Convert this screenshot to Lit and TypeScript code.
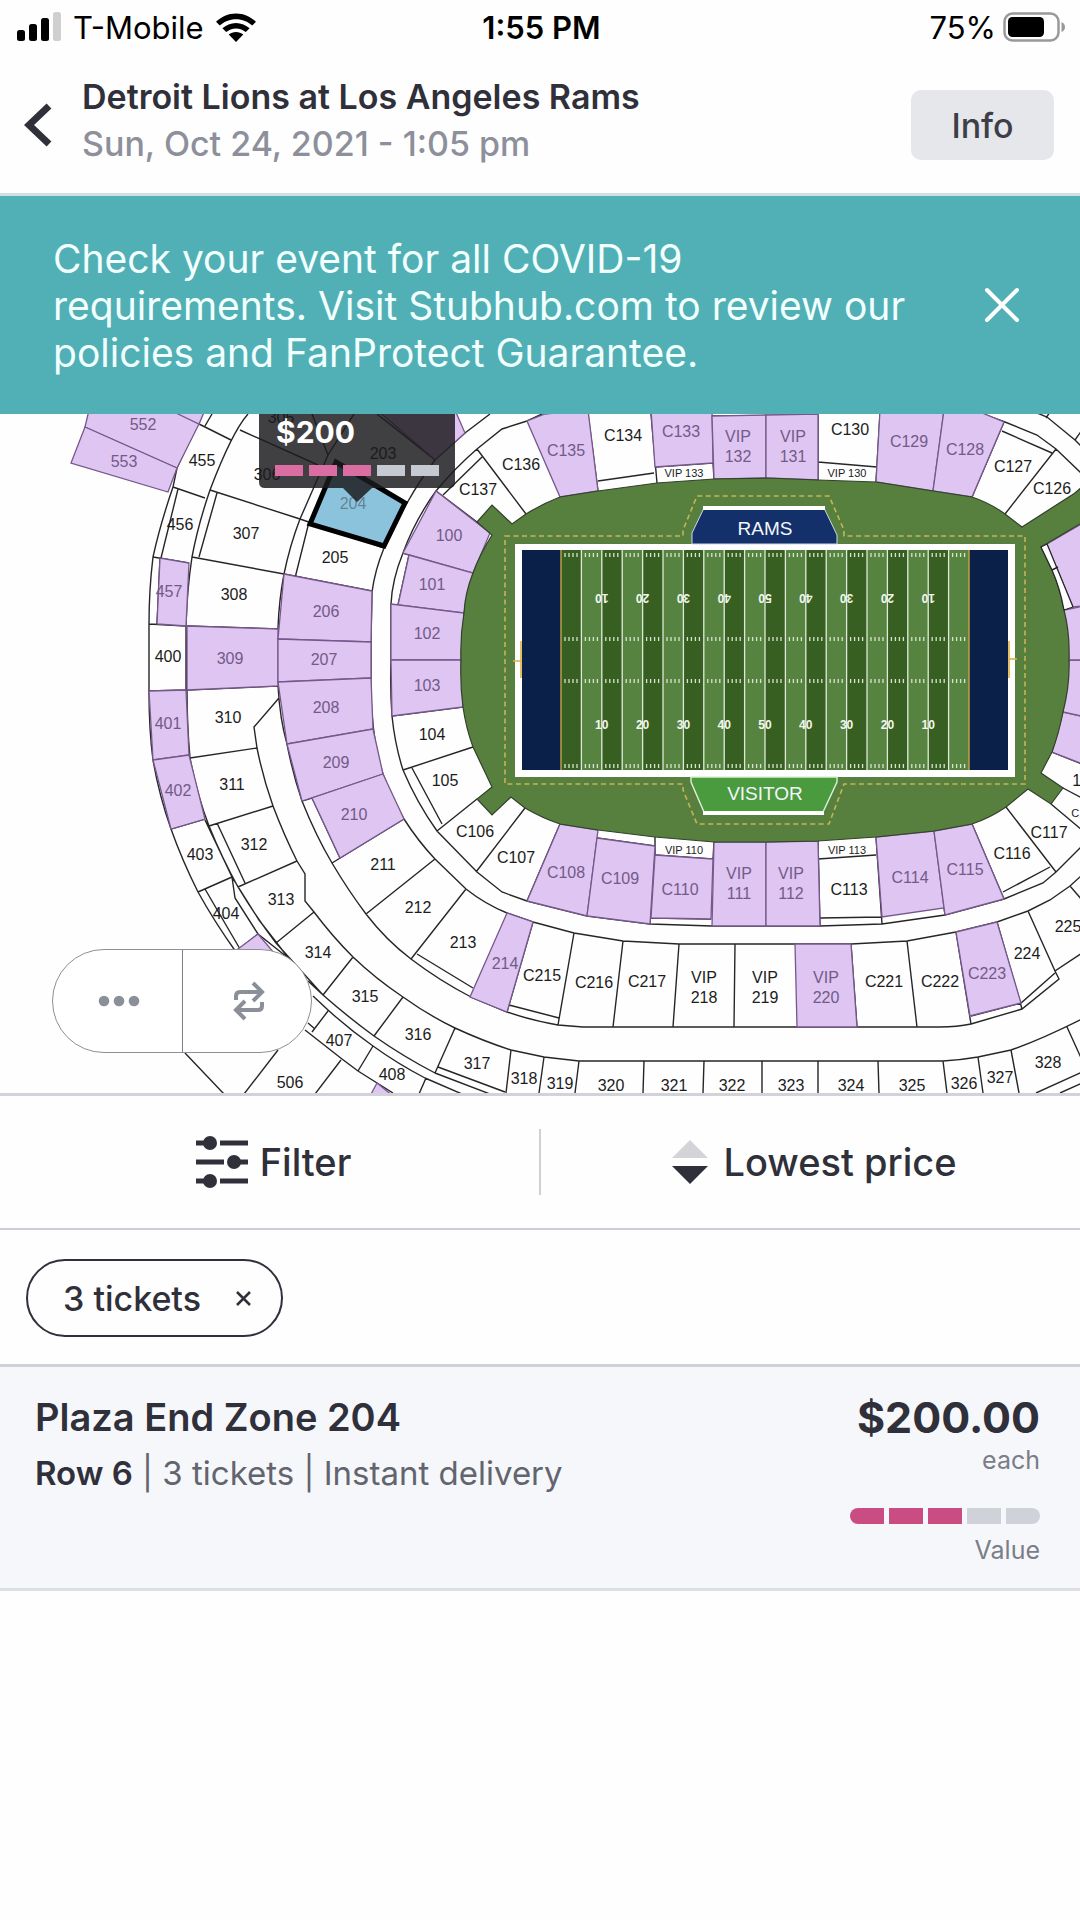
import { LitElement, html, css, svg } from "lit";
import { customElement, property } from "lit/decorators.js";

type Label = [text: string, x: number, y: number, listed?: boolean];

/* Sections with listings, tinted lilac. */
const LISTED: string[] = [
  "89,410 85,427 177,468 199,424 178,410",
  "85,427 71,463 168,492 177,468",
  "170,410 178,414 199,424 205,410",
  "160,558 189,563 186,626 157,624",
  "149,691 186,690 189,755 153,760",
  "153,760 189,755 205,819 171,829",
  "238,949 258,934 280,960 246,960",
  "187,626 278,629 278,686 187,690",
  "377,410 435,460 465,433 455,410",
  "284,574 372,591 371,642 278,639",
  "278,639 371,642 371,678 278,682",
  "278,682 371,678 373,729 287,744",
  "287,744 373,729 383,774 302,801",
  "312,798 383,774 404,819 340,858",
  "507,913 533,922 507,1012 470,997",
  "795,944 851,944 857,1027 797,1027",
  "956,932 997,922 1021,1003 970,1016",
  "436,491 490,533 473,573 403,553",
  "409,555 473,573 464,613 398,605",
  "391,604 464,613 461,660 391,660",
  "391,660 461,660 463,707 392,716",
  "560,824 598,830 587,916 527,901",
  "597,838 655,846 650,924 587,916",
  "655,855 713,859 711,919 651,918",
  "714,842 766,842 766,926 712,926",
  "766,842 818,841 820,926 766,926",
  "876,837 934,831 944,908 882,917",
  "934,831 972,824 1004,899 945,915",
  "1063,712 1090,718 1090,767 1052,752",
  "1069,660 1090,660 1090,718 1063,712",
  "1064,610 1090,605 1090,660 1069,660",
  "1047,544 1090,519 1090,605 1073,607",
  "527,421 545,414 588,410 598,491 560,497",
  "651,410 712,410 713,463 655,467",
  "712,416 766,415 766,478 714,479",
  "766,415 818,414 818,480 766,478",
  "880,410 944,410 933,491 876,482",
  "944,410 975,410 1004,422 972,497 933,491",
  "377,1083 393,1096 370,1096",
];

/* Outlines and dividers of the remaining sections. */
const LINES: string[] = [
  /* outer edge of the 400 level */
  "M202,414L198,423 177,468 173,487Q160,525 153,557Q149,590 149,624L149,691Q149,730 153,760Q159,795 171,829Q182,860 198,892Q214,921 236,952",
  "M305,1030L342,1059 358,1071 393,1093",
  /* edge between the 300 and 400 levels */
  "M248,414Q232,432 210,490Q198,525 192,557Q187,590 186,626L187,690Q187,725 190,758Q197,795 209,826Q222,858 238,887Q256,917 276,943L323,995Q348,1017 374,1036Q404,1057 435,1073L490,1094",
  "M232,877L235,898 258,934 287,957",
  "M205,820L232,877 259,920 290,960",
  "M308,981L323,995M313,996L328,1010Q350,1030 373,1046Q398,1064 425,1078L462,1094",
  /* inner edge of the 300 level */
  "M279,698L254,727 257,748Q263,778 273,806Q284,835 297,861L305,874 305,901 314,912Q332,936 353,957Q376,979 403,997Q428,1015 455,1028Q483,1041 511,1050L544,1057 579,1061H943Q961,1060 978,1057L1011,1050Q1040,1040 1082,1019",
  /* outer edge of the 200 level */
  "M328,455L300,519Q290,545 284,574Q279,600 278,628V686Q280,720 287,744Q293,775 302,801Q316,836 332,863Q348,890 366,914Q386,940 411,959Q440,981 471,997L507,1012Q530,1020 558,1025L583,1027H940Q957,1027 971,1024L1022,1009 1059,979 1055,971 1082,953",
  /* walkway edge of the 200 level */
  "M490,414L465,433 435,460Q420,480 407,503Q394,524 384,548Q375,570 372,592L371,643V678Q370,705 375,740Q378,758 383,774Q392,798 404,819Q418,841 435,859L466,889Q485,904 507,913L533,922 574,933 623,941 679,944H851L907,941 956,932 997,922 1028,911 1050,900 1070,886 1082,875",
  /* walkway edge of the 100 level */
  "M542,414L527,421 502,429 477,449Q455,468 436,491Q415,520 403,553Q392,580 391,604V660Q390,690 392,716Q395,745 403,770Q417,803 437,831L477,872 502,892 527,901 587,916 650,924 712,926H820L882,924 945,915 1004,899 1043,883 1056,872 1082,846",
  "M983,414L1005,422 1037,435 1056,449 1082,474M1027,409L1047,417 1075,440 1082,447M1046,418L1050,412M1075,440L1082,430",
  /* 400 level */
  "M199,424L231,440M205,426L212,414M173,487L205,498M178,489L161,558M153,557L189,563M160,558L157,624M149,624L186,626V690L149,691M171,829L205,819M198,892L232,877M205,889L240,949M239,949L258,934M328,1011L312,1032M308,1023L315,1029M373,1046L358,1071M426,1078L419,1094M278,1050L244,1094M341,1060L315,1094M185,1053L224,1094",
  /* 300 level */
  "M240,430L318,465M210,490L300,519M217,493L199,557M192,557L284,574M187,626L278,629M187,690L278,686M190,758L257,748M209,826L273,806M217,823L245,883M238,887L297,861M276,943L314,912M323,995L353,957M374,1036L403,997M435,1073L455,1028M438,1067L505,1092M511,1050L506,1093M544,1057L539,1093M579,1061L575,1093M644,1061L643,1093M704,1061L703,1093M762,1061V1093M818,1061V1093M878,1061L879,1093M943,1061L947,1093M978,1057L983,1093M1011,1050L1019,1093M1067,1027L1082,1060M1036,1093L1082,1072M1060,1093L1082,1083",
  /* 200 level */
  "M312,414L328,455L354,414M377,414L435,460M309,522L295,578M300,519L384,548M284,574L372,591M302,801L312,798 340,858M332,863L404,819M366,914L435,859M411,959L466,889M417,954L473,988M533,922L507,1012M509,1005L559,1018M574,933L558,1025M623,941L613,1027M679,944L673,1027M735,944L734,1027M907,941L917,1027M851,944L857,1027M956,932L971,1024M997,922L1022,1009M971,1016L1021,1003 1055,973M1028,911L1055,971M1070,886L1082,900",
  /* 100 level */
  "M436,491L477,522M443,495L482,457M403,553L409,555 398,605M392,716L463,707M403,770L473,747M412,768L442,824M437,831L477,799M525,808L476,872M560,824L527,901M597,838L655,846M655,837V855L713,859 714,842M655,855L650,924M651,918L711,919M818,841L820,926M818,859L876,855M820,918L882,917M876,837L882,924M944,908L945,915M972,824L1004,899M1003,892L1050,867M1006,807L1056,872M1051,804L1082,830M1063,788L1082,798M1052,752L1082,764M1052,569L1082,556M477,449L526,514M598,481L654,473M588,414L598,491M651,414L657,483M655,467L713,463 714,479M712,416L818,415V480M818,462L877,467M880,414L876,482M1004,422L972,497M1056,449L1005,514M1002,431L1052,453M1075,493L1082,489",
];

const TURF =
  "M492,535Q479,556 473,573Q465,593 464,613Q460,637 461,660Q460,685 463,707Q466,728 473,747L492,787 477,799 492,815 511,797 525,808Q542,818 560,824L598,830 655,837 714,842H766L818,841 876,837 934,831 972,824Q990,818 1006,807L1028,789 1051,804 1063,788 1041,773 1052,752Q1059,733 1063,712Q1070,685 1069,660Q1070,633 1064,610Q1060,588 1052,570L1041,547 1090,518V480L1075,493 1022,527 1005,514Q990,503 972,497L933,491 876,482 818,480 766,478 714,479 657,483 598,491 560,497Q542,504 526,514L512,524 492,505 477,522Z";

const LABELS: Label[] = [
  ["552", 143, 424, true], ["553", 124, 461, true], ["455", 202, 460], ["456", 180, 524],
  ["457", 169, 591, true], ["400", 168, 656], ["401", 168, 723, true], ["402", 178, 790, true],
  ["403", 200, 854], ["404", 226, 913], ["305", 281, 417], ["306", 267, 474], ["307", 246, 533],
  ["308", 234, 594], ["309", 230, 658, true], ["310", 228, 717], ["311", 232, 784],
  ["312", 254, 844], ["313", 281, 899], ["314", 318, 952], ["315", 365, 996], ["316", 418, 1034],
  ["317", 477, 1063], ["318", 524, 1078], ["319", 560, 1083], ["320", 611, 1085],
  ["321", 674, 1085], ["322", 732, 1085], ["323", 791, 1085], ["324", 851, 1085],
  ["325", 912, 1085], ["326", 964, 1083], ["327", 1000, 1077], ["328", 1048, 1062],
  ["407", 339, 1040], ["408", 392, 1074], ["506", 290, 1082], ["203", 383, 453],
  ["205", 335, 557], ["206", 326, 611, true], ["207", 324, 659, true], ["208", 326, 707, true],
  ["209", 336, 762, true], ["210", 354, 814, true], ["211", 383, 864], ["212", 418, 907],
  ["213", 463, 942], ["214", 505, 963, true], ["C215", 542, 975], ["C216", 594, 982],
  ["C217", 647, 981], ["VIP", 704, 977], ["218", 704, 997], ["VIP", 765, 977], ["219", 765, 997],
  ["VIP", 826, 977, true], ["220", 826, 997, true], ["C221", 884, 981], ["C222", 940, 981],
  ["C223", 987, 973, true], ["224", 1027, 953], ["225", 1068, 926], ["100", 449, 535, true],
  ["101", 432, 584, true], ["102", 427, 633, true], ["103", 427, 685, true], ["104", 432, 734],
  ["105", 445, 780], ["C106", 475, 831], ["C107", 516, 857], ["C108", 566, 872, true],
  ["C109", 620, 878, true], ["C110", 680, 889, true], ["VIP", 739, 873, true],
  ["111", 739, 893, true], ["VIP", 791, 873, true], ["112", 791, 893, true], ["C113", 849, 889],
  ["C114", 910, 877, true], ["C115", 965, 869, true], ["C116", 1012, 853], ["C117", 1049, 832],
  ["118", 1085, 780], ["C137", 478, 489], ["C136", 521, 464], ["C135", 566, 450, true],
  ["C134", 623, 435], ["C133", 681, 431, true], ["VIP", 738, 436, true], ["132", 738, 456, true],
  ["VIP", 793, 436, true], ["131", 793, 456, true], ["C130", 850, 429], ["C129", 909, 441, true],
  ["C128", 965, 449, true], ["C127", 1013, 466], ["C126", 1052, 488],
];

const SMALL_LABELS: Label[] = [
  ["VIP 133", 684, 473], ["VIP 130", 847, 473], ["VIP 110", 684, 850], ["VIP 113", 847, 850],
  ["C118", 1084, 813],
];

const YARDS = [10, 20, 30, 40, 50, 40, 30, 20, 10];
const STRIPE = 20.4;
const FIELD_X = 561;

@customElement("value-meter")
class ValueMeter extends LitElement {
  @property({ type: Number }) score = 0;

  static styles = css`
    :host { display: flex; gap: 5px; }
    .seg { width: 34px; height: 16px; background: #d0d2da; }
    .seg.on { background: #c94d82; }
    .seg:first-child { border-radius: 8px 0 0 8px; }
    .seg:last-child { border-radius: 0 8px 8px 0; }
  `;

  render() {
    return [1, 2, 3, 4, 5].map(
      (n) => html`<span class="seg ${n <= this.score ? "on" : ""}"></span>`
    );
  }
}

@customElement("stadium-map")
class StadiumMap extends LitElement {
  static styles = css`
    :host { display: block; position: relative; font-family: "Liberation Sans", Arial, sans-serif; }
    .map { display: block; width: 100%; height: auto; background: #fefefe; }
    .listed { fill: #dec5f2; stroke: #76588c; stroke-width: 1.3; }
    .lines { fill: none; stroke: #262626; stroke-width: 1.4; }
    .turf { fill: #57803f; stroke: #33402c; stroke-width: 1.2; }
    .strip { fill: #fff; stroke: #262626; stroke-width: 1.2; }
    .label { font-size: 16px; text-anchor: middle; fill: #1c1c1c; }
    .label.dim { fill: #735a88; }
    .label.small { font-size: 11px; }
    .yard { font-size: 12px; font-weight: 700; text-anchor: middle; fill: #f2f7ee; }
    .bench { font-size: 19px; text-anchor: middle; fill: #f3f6fa; }
    .price { font-family: Inter, sans-serif; font-size: 30px; font-weight: 700; fill: #fff; }
    .tools {
      position: absolute; left: 52px; bottom: 40px; display: flex; width: 260px; height: 104px;
      box-sizing: border-box; border: 1px solid #8b8f98; border-radius: 52px; background: #fff;
      overflow: hidden;
    }
    .tool {
      flex: 1; display: flex; align-items: center; justify-content: center; padding: 0 0 0 4px;
      border: 0; background: none; color: #8b8f9a;
    }
    .tool + .tool { border-left: 1px solid #7b7f88; }
  `;

  private field() {
    const stripes = Array.from({ length: 20 }, (_, i) => i);
    const hashes = stripes.flatMap((i) =>
      [4, 8, 12, 16].map((d) => FIELD_X + i * STRIPE + d)
    );
    return svg`
      <path class="turf" d=${TURF}></path>
      <path d="M505,536H683V530L697,496H829L844,530V536H1025V784H844L829,824H697L683,790V784H505Z"
        fill="none" stroke="#c8b355" stroke-width="1.6" stroke-dasharray="5 3.5"></path>
      <rect x="515" y="544" width="500" height="233" fill="#fff"></rect>
      <rect x="522" y="550" width="39" height="220" fill="#0a2049"></rect>
      <rect x="969" y="550" width="39" height="220" fill="#0a2049"></rect>
      ${stripes.map(
        (i) => svg`<rect x=${FIELD_X + i * STRIPE} y="550" width=${STRIPE} height="220"
          fill=${i % 2 ? "#578341" : "#385f22"}></rect>`
      )}
      ${stripes.slice(1).map(
        (i) => svg`<path d="M${FIELD_X + i * STRIPE},550V770" stroke="#dfe9d9" stroke-width="1.3"></path>`
      )}
      ${[555, 639, 681, 766].map(
        (y) => svg`<path d=${hashes.map((x) => `M${x},${y - 2}v4`).join("")}
          stroke="#d6e3cd" stroke-width="1.3"></path>`
      )}
      <path d="M561,550V770M969,550V770" stroke="#c9a545" stroke-width="1.4"></path>
      <path d="M521,641V678M513,661H521M1009,641V678M1009,659H1017" stroke="#e0b040" stroke-width="1.6"></path>
      ${YARDS.map((n, i) => {
        const x = FIELD_X + (i + 1) * STRIPE * 2;
        return svg`
          <text class="yard" x=${x} y="729">${n}</text>
          <text class="yard" x=${x} y="600" transform="rotate(180 ${x} 597)">${n}</text>`;
      })}
      <path d="M692,544V533L704,508H824L837,535V544Z" fill="#14306a" stroke="#cdd8e6" stroke-width="1"></path>
      <path d="M703,508H825" stroke="#fff" stroke-width="4"></path>
      <path d="M691,777V782L704,812H823L837,782V777Z" fill="#4a9a3e" stroke="#dcefd8" stroke-width="1.4"></path>
      <path d="M703,813H824" stroke="#fff" stroke-width="4"></path>
      <text class="bench" x="765" y="535">RAMS</text>
      <text class="bench" x="765" y="800">VISITOR</text>
    `;
  }

  private marker() {
    return svg`
      <path d="M336,462L405,503 384,546 310,524Z" fill="#8cc3dc" stroke="#000" stroke-width="5"></path>
      <text class="label" x="353" y="509" fill-opacity="0.4">204</text>
      <path d="M259,410H455V482Q455,488 449,488H372L357,502 343,488H265Q259,488 259,482Z"
        fill="#1c1a1e" fill-opacity="0.84"></path>
      <text class="price" x="276" y="443">$200</text>
      ${[0, 1, 2, 3, 4].map(
        (i) => svg`<rect x=${275 + i * 34} y="465" width="28" height="11"
          fill=${i < 3 ? "#da6da2" : "#c4c9d2"}></rect>`
      )}
    `;
  }

  render() {
    return html`
      <svg class="map" viewBox="0 414 1080 679" role="img" aria-label="Seating map">
        <path class="lines" d=${LINES.join("")}></path>
        ${LISTED.map((p) => svg`<polygon class="listed" points=${p}></polygon>`)}
        ${this.field()}
        <path class="strip" d="M1041,547L1047,544 1073,607 1064,610Q1060,588 1052,570Z"></path>
        <path class="lines" d="M1052,570L1058,567"></path>
        ${LABELS.map(
          ([t, x, y, on]) => svg`<text class="label ${on ? "dim" : ""}" x=${x} y=${y + 6}>${t}</text>`
        )}
        ${SMALL_LABELS.map(
          ([t, x, y]) => svg`<text class="label small" x=${x} y=${y + 4}>${t}</text>`
        )}
        ${this.marker()}
      </svg>
      <div class="tools">
        <button class="tool" aria-label="More">
          <svg width="42" height="12" viewBox="0 0 42 12" fill="currentColor">
            <circle cx="6" cy="6" r="5.3"></circle><circle cx="21" cy="6" r="5.3"></circle><circle cx="36" cy="6" r="5.3"></circle>
          </svg>
        </button>
        <button class="tool" aria-label="Switch view">
          <svg width="32" height="40" viewBox="0 0 32 40" fill="none" stroke="currentColor" stroke-width="4">
            <path d="M3,19V15Q3,11 7,11H28M20,2L29,11L20,20"></path>
            <path d="M29,21V25Q29,29 25,29H4M12,20L3,29L12,38"></path>
          </svg>
        </button>
      </div>
    `;
  }
}

@customElement("app-root")
class AppRoot extends LitElement {
  static styles = css`
    :host {
      display: block; min-height: 100vh; background: #fefefe; color: #2f303a;
      font-family: Inter, "Liberation Sans", sans-serif;
    }
    button { font: inherit; color: inherit; padding: 0; border: 0; background: none; }
    svg { display: block; flex: none; }
    h1, h2, p { margin: 0; }
    .status {
      display: grid; grid-template-columns: 1fr auto 1fr; align-items: center; height: 54px;
      padding: 0 14px 0 17px; color: #000; font-size: 31px;
    }
    .carrier, .power { display: flex; align-items: center; }
    .carrier { gap: 12px; }
    .power { justify-content: flex-end; gap: 7px; }
    .clock { font-weight: 600; }
    .head {
      display: flex; align-items: center; height: 142px; box-sizing: border-box;
      padding: 3px 26px 0 24px; border-bottom: 3px solid #cfdfe3;
    }
    .back { width: 58px; height: 70px; display: flex; align-items: center; }
    .event { flex: 1; padding-bottom: 10px; }
    .title { font-size: 34px; line-height: 47px; font-weight: 600; }
    .date { font-size: 34px; line-height: 47px; font-weight: 500; color: #8d909b; }
    .info {
      width: 143px; height: 70px; border-radius: 10px; background: #e6e7eb; color: #3d3e48;
      font-size: 34px; font-weight: 500;
    }
    .notice {
      display: flex; align-items: center; min-height: 218px; padding: 0 60px 0 53px;
      background: #51b0b5; color: #f2ffff;
    }
    .notice-text { flex: 1; font-size: 39px; line-height: 47px; padding-right: 64px; }
    .bar {
      display: flex; align-items: center; height: 137px; box-sizing: border-box;
      border-top: 3px solid #d2d2da; border-bottom: 2px solid #cdcdd5;
    }
    .choice {
      flex: 1; display: flex; align-items: center; justify-content: center; height: 66px;
      padding-left: 8px; font-size: 38px; font-weight: 500;
    }
    .filter { gap: 12px; border-right: 2px solid #cfcfd6; }
    .sort { gap: 15px; }
    .chips { padding: 29px 26px 27px; border-bottom: 3px solid #d0d1d8; }
    .chip {
      display: flex; align-items: center; justify-content: space-between; width: 257px; height: 78px; box-sizing: border-box;
      padding: 0 30px 0 35px; border: 2px solid #2f303a; border-radius: 39px;
      font-size: 34px; font-weight: 500;
    }
    .ticket {
      display: flex; justify-content: space-between; height: 224px; box-sizing: border-box;
      padding: 24px 40px 0 35px; background: #f6f7fb; border-bottom: 3px solid #dedfe5;
    }
    .seat { font-size: 38px; line-height: 52px; font-weight: 600; }
    .detail { font-size: 33px; line-height: 60px; color: #62646e; }
    .detail strong { font-weight: 600; color: #2f303a; }
    .cost { display: flex; flex-direction: column; align-items: flex-end; }
    .amount { font-size: 43px; line-height: 52px; font-weight: 700; }
    .note { font-size: 25px; line-height: 34px; color: #7b7d87; }
    .meter { margin: 31px 0 9px; }
  `;

  render() {
    return html`
      <div class="status">
        <div class="carrier">
          <svg width="44" height="30" viewBox="0 0 44 30">
            <rect x="0" y="18" width="8" height="11" rx="2.5"></rect>
            <rect x="12" y="12" width="8" height="17" rx="2.5"></rect>
            <rect x="24" y="6" width="8" height="23" rx="2.5"></rect>
            <rect x="36" y="0" width="8" height="29" rx="2.5" fill="#cfcfcf"></rect>
          </svg>
          <span>T-Mobile</span>
          <svg width="40" height="29" viewBox="0 0 40 29">
            <path d="M20,6.2C26.3,6.2 32,8.6 36.2,12.6L40,8.8C34.8,3.6 27.8,0.4 20,0.4S5.2,3.6 0,8.8L3.8,12.6C8,8.6 13.7,6.2 20,6.2Z"></path>
            <path d="M20,15.4C23.8,15.4 27.2,16.8 29.8,19.1L33.6,15.3C30,12 25.2,9.9 20,9.9S10,12 6.4,15.3L10.2,19.1C12.8,16.8 16.2,15.4 20,15.4Z"></path>
            <path d="M27.3,21.6C25.3,19.9 22.8,18.9 20,18.9S14.7,19.9 12.7,21.6L20,29Z"></path>
          </svg>
        </div>
        <span class="clock">1:55 PM</span>
        <div class="power">
          <span>75%</span>
          <svg width="63" height="30" viewBox="0 0 63 30">
            <rect x="1.5" y="1.5" width="54" height="27" rx="8" fill="none" stroke="#999" stroke-width="2.5"></rect>
            <rect x="5" y="5" width="36" height="20" rx="4.5"></rect>
            <path d="M58.5,10Q62,11.5 62,15T58.5,20Z" fill="#999"></path>
          </svg>
        </div>
      </div>

      <header class="head">
        <button class="back" aria-label="Back">
          <svg width="28" height="44" viewBox="0 0 28 44" fill="none" stroke="#2f303a" stroke-width="7">
            <path d="M25,3L5,22L25,41"></path>
          </svg>
        </button>
        <div class="event">
          <h1 class="title">Detroit Lions at Los Angeles Rams</h1>
          <p class="date">Sun, Oct 24, 2021 - 1:05 pm</p>
        </div>
        <button class="info">Info</button>
      </header>

      <section class="notice">
        <p class="notice-text">Check your event for all COVID-19 requirements. Visit Stubhub.com to review our policies and FanProtect Guarantee.</p>
        <button aria-label="Dismiss">
          <svg width="36" height="36" viewBox="0 0 36 36" stroke="#fff" stroke-width="4" stroke-linecap="round">
            <path d="M3,3L33,33M33,3L3,33"></path>
          </svg>
        </button>
      </section>

      <stadium-map></stadium-map>

      <div class="bar">
        <button class="choice filter">
          <svg width="52" height="52" viewBox="0 0 52 52" fill="#2f303a">
            <path d="M0,4.500H8V9.500H0ZM24,4.500H52V9.500H24ZM0,23.500H28V28.500H0ZM44,23.500H52V28.500H44ZM0,42.500H8V47.500H0ZM24,42.500H52V47.500H24Z"></path>
            <circle cx="14" cy="7" r="7"></circle><circle cx="38" cy="26" r="7"></circle><circle cx="14" cy="45" r="7"></circle>
          </svg>
          Filter
        </button>
        <button class="choice sort">
          <svg width="36" height="44" viewBox="0 0 36 44">
            <path d="M0,18L18,0L36,18Z" fill="#d3d3d8"></path>
            <path d="M0,26H36L18,44Z" fill="#2f303a"></path>
          </svg>
          Lowest price
        </button>
      </div>

      <div class="chips">
        <button class="chip">
          3 tickets
          <svg width="15" height="15" viewBox="0 0 15 15" stroke="#2f303a" stroke-width="2.5">
            <path d="M1,1L14,14M14,1L1,14"></path>
          </svg>
        </button>
      </div>

      <article class="ticket">
        <div>
          <h2 class="seat">Plaza End Zone 204</h2>
          <p class="detail"><strong>Row 6</strong> | 3 tickets | Instant delivery</p>
        </div>
        <div class="cost">
          <p class="amount">$200.00</p>
          <p class="note">each</p>
          <value-meter class="meter" .score=${3}></value-meter>
          <p class="note">Value</p>
        </div>
      </article>
    `;
  }
}
